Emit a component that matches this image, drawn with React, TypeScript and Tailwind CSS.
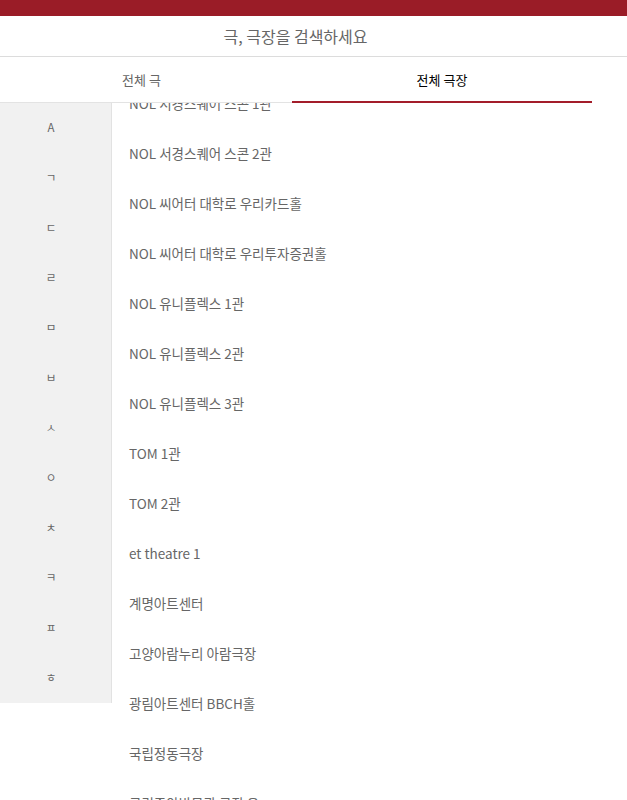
const INITIALS = ["A", "ㄱ", "ㄷ", "ㄹ", "ㅁ", "ㅂ", "ㅅ", "ㅇ", "ㅊ", "ㅋ", "ㅍ", "ㅎ"];

const THEATERS = [
  "NOL 서경스퀘어 스콘 1관",
  "NOL 서경스퀘어 스콘 2관",
  "NOL 씨어터 대학로 우리카드홀",
  "NOL 씨어터 대학로 우리투자증권홀",
  "NOL 유니플렉스 1관",
  "NOL 유니플렉스 2관",
  "NOL 유니플렉스 3관",
  "TOM 1관",
  "TOM 2관",
  "et theatre 1",
  "계명아트센터",
  "고양아람누리 아람극장",
  "광림아트센터 BBCH홀",
  "국립정동극장",
  "국립중앙박물관 극장 용",
];

export default function App() {
  return (
    <div className="w-[627px] bg-white font-['Noto_Sans_CJK_KR','Noto_Sans',sans-serif]">
      <header className="flex h-[16px] justify-center overflow-hidden bg-[#9a1c27] pr-[36px]">
        <span className="-mt-[28px] text-[20px] leading-[30px] font-bold text-white">공연장 찾기</span>
      </header>

      <div className="flex h-[41px] items-center justify-center border-b border-[#dcdcdc] pr-[36px] text-[16px] text-[#666]">
        극, 극장을 검색하세요
      </div>

      <nav className="-ml-[9px] flex h-[46px] w-[601px]">
        <button className="flex w-[301px] items-center justify-center border-b border-[#e3e3e3] text-[13px] text-[#666]">
          전체 극
        </button>
        <button className="flex w-[300px] items-center justify-center border-b-2 border-[#a31d2a] pt-[2px] text-[13px] text-black">
          전체 극장
        </button>
      </nav>

      <div className="flex overflow-hidden">
        <aside className="flex h-[600px] w-[112px] shrink-0 flex-col self-start border-r border-[#e2e2e2] bg-[#f1f1f1]">
          {INITIALS.map((c) => (
            <div key={c} className="flex h-[50px] items-center justify-center pr-[9px] text-[11.5px] text-[#666]">
              {c}
            </div>
          ))}
        </aside>
        <ul className="-mt-[25px] flex-1 pl-[17px]">
          {THEATERS.map((t) => (
            <li key={t} className="flex h-[50px] items-center text-[13.5px] text-[#666]">
              {t}
            </li>
          ))}
        </ul>
      </div>
    </div>
  );
}
